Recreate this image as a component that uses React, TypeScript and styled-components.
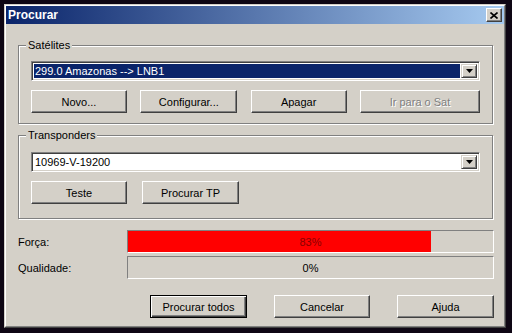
import React from "react";
import styled, { createGlobalStyle } from "styled-components";

const GlobalStyle = createGlobalStyle`
  * {
    box-sizing: border-box;
  }

  body {
    margin: 0;
    background: #0e0614;
    font-family: "Liberation Sans", Arial, sans-serif;
    font-size: 11px;
  }
`;

const Window = styled.div`
  margin: 4px;
  width: 502px;
  height: 324px;
  border: 1px solid;
  border-color: #d4d0c8 #404040 #404040 #d4d0c8;
  background: #d4d0c8;
`;

const Frame = styled.div`
  height: 100%;
  border: 1px solid;
  border-color: #ffffff #808080 #808080 #ffffff;
  display: flex;
  flex-direction: column;
`;

const TitleBar = styled.div`
  height: 18px;
  display: flex;
  align-items: center;
  justify-content: space-between;
  padding: 0 2px 0 2px;
  background: linear-gradient(to right, #0a246a, #a6caf0);
`;

const Title = styled.span`
  color: #ffffff;
  font-weight: bold;
  font-size: 12px;
`;

const CloseButton = styled.div`
  width: 16px;
  height: 14px;
  display: flex;
  align-items: center;
  justify-content: center;
  background: #d4d0c8;
  border: 1px solid;
  border-color: #ffffff #404040 #404040 #ffffff;
  box-shadow: inset -1px -1px #808080;
`;

const Body = styled.div`
  flex: 1;
  display: flex;
  flex-direction: column;
  padding: 21px 10px 0 12px;
`;

const GroupBox = styled.div<{ $pt: number; $pb: number }>`
  position: relative;
  border: 1px solid #808080;
  box-shadow: inset 1px 1px 0 #ffffff, 1px 1px 0 #ffffff;
  padding: ${(p) => p.$pt}px 12px ${(p) => p.$pb}px 12px;
  margin-right: 1px;
  margin-bottom: 11px;
  display: flex;
  flex-direction: column;
  gap: 9px;
`;

const Legend = styled.span`
  position: absolute;
  top: -7px;
  left: 7px;
  padding: 0 2px;
  line-height: 13px;
  background: #d4d0c8;
  color: #000000;
`;

const Combo = styled.div`
  height: 20px;
  display: flex;
  padding: 2px;
  border: 1px solid;
  border-color: #808080 #ffffff #ffffff #808080;
  box-shadow: inset 1px 1px #404040, inset -1px -1px #d4d0c8;
  background: #ffffff;
`;

const ComboValue = styled.div<{ $selected?: boolean }>`
  flex: 1;
  margin-right: 1px;
  padding-left: 1px;
  display: flex;
  align-items: center;
  background: ${(p) => (p.$selected ? "#0a246a" : "#ffffff")};
  color: ${(p) => (p.$selected ? "#ffffff" : "#000000")};
`;

const DropButton = styled.div`
  width: 16px;
  display: flex;
  align-items: center;
  justify-content: center;
  background: #d4d0c8;
  border: 1px solid;
  border-color: #d4d0c8 #404040 #404040 #d4d0c8;
  box-shadow: inset 1px 1px #ffffff, inset -1px -1px #808080;
`;

const ButtonRow = styled.div<{ $justify: string; $gap: number }>`
  display: flex;
  justify-content: ${(p) => p.$justify};
  gap: ${(p) => p.$gap}px;
`;

const Button = styled.div<{ $w: number; $default?: boolean; $disabled?: boolean }>`
  width: ${(p) => p.$w}px;
  height: 23px;
  display: flex;
  align-items: center;
  justify-content: center;
  background: #d4d0c8;
  color: ${(p) => (p.$disabled ? "#808080" : "#000000")};
  text-shadow: ${(p) => (p.$disabled ? "1px 1px 0 #ffffff" : "none")};
  border: 1px solid;
  border-color: ${(p) =>
    p.$default ? "#000000" : "#ffffff #404040 #404040 #ffffff"};
  box-shadow: ${(p) =>
    p.$default
      ? "inset 1px 1px #ffffff, inset -1px -1px #404040, inset -2px -2px #808080"
      : "inset -1px -1px #808080"};
`;

const MeterRow = styled.div`
  display: flex;
  align-items: center;
  margin-bottom: 3px;
`;

const MeterLabel = styled.span`
  width: 109px;
  color: #000000;
`;

const Meter = styled.div`
  position: relative;
  flex: 1;
  height: 23px;
  display: flex;
  align-items: center;
  justify-content: center;
  border: 1px solid;
  border-color: #808080 #ffffff #ffffff #808080;
`;

const MeterFill = styled.div`
  position: absolute;
  left: 0;
  top: 0;
  bottom: 0;
  background: #ff0000;
`;

const MeterText = styled.span<{ $onFill: boolean }>`
  position: relative;
  color: ${(p) => (p.$onFill ? "#8a0000" : "#000000")};
`;

const Footer = styled(ButtonRow)`
  margin-top: 13px;
`;

const Arrow = () => (
  <svg width="7" height="4" viewBox="0 0 7 4">
    <polygon points="0,0 7,0 3.5,4" fill="#000000" />
  </svg>
);

const CloseIcon = () => (
  <svg width="8" height="7" viewBox="0 0 8 7">
    <path d="M0.5 0.5 L7.5 6.5 M7.5 0.5 L0.5 6.5" stroke="#000000" strokeWidth="1.6" />
  </svg>
);

const meters = [
  { label: "Força", value: 83 },
  { label: "Qualidade", value: 0 },
];

export default function App() {
  return (
    <>
      <GlobalStyle />
      <Window>
        <Frame>
          <TitleBar>
            <Title>Procurar</Title>
            <CloseButton>
              <CloseIcon />
            </CloseButton>
          </TitleBar>
          <Body>
            <GroupBox $pt={15} $pb={10}>
              <Legend>Satélites</Legend>
              <Combo>
                <ComboValue $selected>299.0 Amazonas --&gt; LNB1</ComboValue>
                <DropButton>
                  <Arrow />
                </DropButton>
              </Combo>
              <ButtonRow $justify="space-between" $gap={0}>
                <Button $w={96}>Novo...</Button>
                <Button $w={97}>Configurar...</Button>
                <Button $w={96}>Apagar</Button>
                <Button $w={120} $disabled>
                  Ir para o Sat
                </Button>
              </ButtonRow>
            </GroupBox>
            <GroupBox $pt={16} $pb={14}>
              <Legend>Transponders</Legend>
              <Combo>
                <ComboValue>10969-V-19200</ComboValue>
                <DropButton>
                  <Arrow />
                </DropButton>
              </Combo>
              <ButtonRow $justify="flex-start" $gap={15}>
                <Button $w={96}>Teste</Button>
                <Button $w={97}>Procurar TP</Button>
              </ButtonRow>
            </GroupBox>
            {meters.map((m) => (
              <MeterRow key={m.label}>
                <MeterLabel>{m.label}:</MeterLabel>
                <Meter>
                  <MeterFill style={{ width: `${m.value}%` }} />
                  <MeterText $onFill={m.value > 50}>{m.value}%</MeterText>
                </Meter>
              </MeterRow>
            ))}
            <Footer $justify="flex-end" $gap={27}>
              <Button $w={97} $default>
                Procurar todos
              </Button>
              <Button $w={96}>Cancelar</Button>
              <Button $w={97}>Ajuda</Button>
            </Footer>
          </Body>
        </Frame>
      </Window>
    </>
  );
}
